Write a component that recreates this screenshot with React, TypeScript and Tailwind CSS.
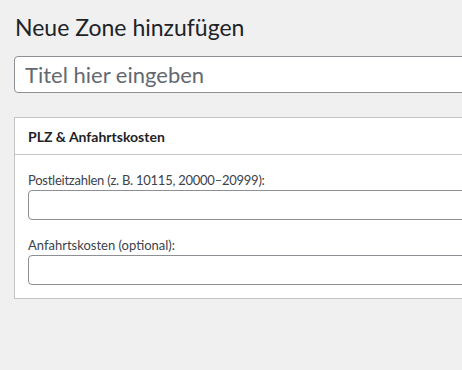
import React from 'react';

const App: React.FC = () => {
  return (
    <div className="w-[462px] h-[370px] overflow-hidden bg-[#f0f0f1] font-['Lato','Noto_Sans',sans-serif] text-[#3c434a]">
      <div className="w-[720px] pl-[14px]">
        <h1 className="pt-[12px] pl-[1px] text-[23px] leading-[30px] font-normal text-[#1d2327]">
          Neue Zone hinzufügen
        </h1>

        {/* Title field */}
        <input
          type="text"
          placeholder="Titel hier eingeben"
          className="mt-[14px] block w-full h-[37px] px-[10px] bg-white border border-[#8c8f94] rounded-[4px] text-[22px] text-[#2c3338] placeholder:text-[#646970] outline-none"
        />

        {/* Postbox */}
        <div className="mt-[24px] bg-white border border-[#c3c4c7]">
          <div className="h-[37px] px-[13px] flex items-center border-b border-[#c3c4c7]">
            <h2 className="text-[14px] font-bold text-[#1d2327]">PLZ &amp; Anfahrtskosten</h2>
          </div>

          <div className="px-[13px] pt-[16px] pb-[13px]">
            <label className="block text-[13px] leading-[18px] mb-[1px] tracking-[-0.25px]">
              Postleitzahlen (z. B. 10115, 20000–20999):
            </label>
            <input
              type="text"
              className="block w-full h-[30px] bg-white border border-[#8c8f94] rounded-[4px] outline-none"
            />

            <label className="block mt-[16px] text-[13px] leading-[18px] mb-[1px]">
              Anfahrtskosten (optional):
            </label>
            <input
              type="text"
              className="block w-full h-[30px] bg-white border border-[#8c8f94] rounded-[4px] outline-none"
            />
          </div>
        </div>
      </div>
    </div>
  );
};

export default App;
